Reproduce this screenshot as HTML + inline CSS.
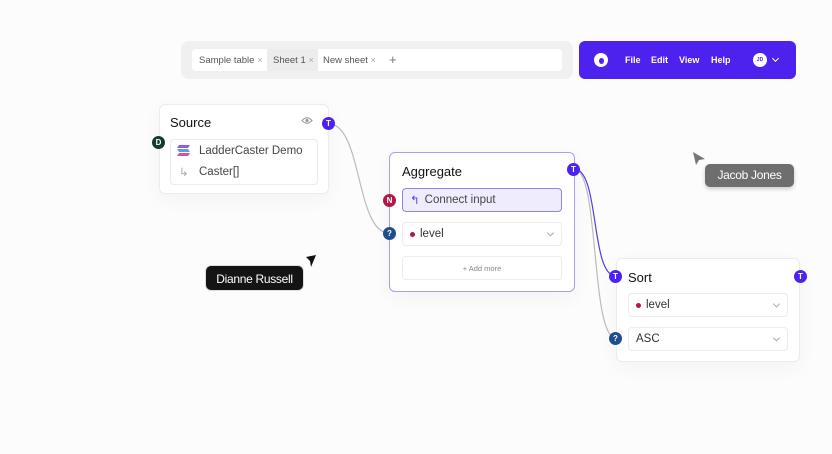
<!DOCTYPE html><html><head><style>
*{box-sizing:border-box;margin:0;padding:0}
body{width:832px;height:454px;background:#fcfcfc;font-family:"Liberation Sans",sans-serif;position:relative;overflow:hidden;color:#222}
.a{position:absolute}
.card{position:absolute;background:#fff;border:1px solid #ececec;border-radius:6px;box-shadow:0 6px 20px rgba(0,0,0,.04)}
.h{position:absolute;width:13px;height:13px;border-radius:50%;color:#fff;font-size:8px;font-weight:bold;text-align:center;line-height:13px}
.sel{position:absolute;border:1px solid #ececec;border-radius:4px;background:#fff;font-size:11.5px;color:#333;padding-left:7px;display:flex;align-items:center}
.chev{position:absolute;right:8px;top:50%;width:5px;height:5px;border-right:1px solid #aaa;border-bottom:1px solid #aaa;transform:translateY(-70%) rotate(45deg)}
.dot{width:5px;height:5px;border-radius:50%;background:#b0174a;margin-right:5px}
</style></head><body>
<svg class="a" style="left:0;top:0" width="832" height="454">
<path d="M329 124 C362 124,356 233,389 233" stroke="#bbb" stroke-width="1.2" fill="none"/>
<path d="M574 169 C600 169,590 276,616 276" stroke="#5a3be0" stroke-width="1.2" fill="none"/>
<path d="M574 169 C600 169,590 338,616 338" stroke="#bbb" stroke-width="1.2" fill="none"/>
<path d="M306 257 L316 255 L311 267 L310 261 Z" fill="#111"/>
<path d="M693 152 L705 159 L699 160 L696 165 Z" fill="#777"/>
</svg>
<div class="a" style="left:181px;top:41px;width:392px;height:38px;background:#f0f0f0;border-radius:8px"></div>
<div class="a" style="left:192px;top:49px;width:370px;height:22px;background:#fff;border-radius:4px;font-size:9.5px;color:#555">
<span class="a" style="left:7px;top:6px">Sample table <span style="color:#aaa">×</span></span>
<span class="a" style="left:75px;top:0;width:51px;height:22px;background:#ececec"></span>
<span class="a" style="left:81px;top:6px">Sheet 1 <span style="color:#aaa">×</span></span>
<span class="a" style="left:131px;top:6px">New sheet <span style="color:#aaa">×</span></span>
<span class="a" style="left:197px;top:3px;font-size:13px;color:#777">+</span></div>
<div class="a" style="left:579px;top:41px;width:217px;height:38px;background:#4d22ee;border-radius:6px;color:#fff;font-size:9px;font-weight:bold">
<span class="a" style="left:15px;top:12px;width:14px;height:14px;border-radius:50%;background:#fff"></span>
<span class="a" style="left:20px;top:17px;width:5px;height:6px;border-radius:50%;background:#4d22ee"></span>
<span class="a" style="left:46px;top:14px">File</span><span class="a" style="left:72px;top:14px">Edit</span><span class="a" style="left:100px;top:14px">View</span><span class="a" style="left:132px;top:14px">Help</span>
<span class="a" style="left:174px;top:12px;width:14px;height:14px;border-radius:50%;background:#fff;color:#4d22ee;font-size:5px;line-height:14px;text-align:center">JD</span>
<span class="a" style="left:194px;top:15px;width:5px;height:5px;border-right:1.2px solid #fff;border-bottom:1.2px solid #fff;transform:rotate(45deg)"></span></div>

<div class="card" style="left:159px;top:104px;width:170px;height:90px">
<div class="a" style="left:10px;top:10px;font-size:13px;color:#111">Source</div>
<svg class="a" style="left:141px;top:11px" width="12" height="9"><path d="M1 4.5 Q6 -1 11 4.5 Q6 10 1 4.5Z" stroke="#999" fill="none"/><circle cx="6" cy="4.5" r="1.6" fill="#999"/></svg>
<div class="a" style="left:10px;top:34px;width:148px;height:46px;border:1px solid #ececec;border-radius:4px;font-size:11.5px;color:#444">
<svg class="a" style="left:5px;top:4px" width="15" height="13"><path d="M3 1h11l-2 3H1z" fill="#8a5cf0"/><path d="M1 5h11l2 3H3z" fill="#5aa0e0"/><path d="M3 9h11l-2 3H1z" fill="#d04fb0"/></svg>
<span class="a" style="left:28px;top:5px">LadderCaster Demo</span>
<span class="a" style="left:8px;top:25px;color:#aaa">↳</span>
<span class="a" style="left:28px;top:26px">Caster[]</span></div></div>
<div class="h" style="left:322px;top:117px;background:#4d22ee">T</div>
<div class="h" style="left:152px;top:136px;background:#123b33">D</div>

<div class="card" style="left:389px;top:152px;width:186px;height:140px;border-color:#aa9ef0">
<div class="a" style="left:12px;top:11px;font-size:13px;color:#111">Aggregate</div></div>
<div class="sel" style="left:402px;top:188px;width:160px;height:24px;background:#efedfd;border-color:#9384ea;color:#444">
<span style="color:#5a3be0;margin-right:5px">↰</span>Connect input</div>
<div class="sel" style="left:402px;top:222px;width:160px;height:24px"><span class="dot"></span>level<span class="chev"></span></div>
<div class="sel" style="left:402px;top:256px;width:160px;height:24px;justify-content:center;font-size:7.5px;color:#888;padding:0">+ Add more</div>
<div class="h" style="left:567px;top:163px;background:#4d22ee">T</div>
<div class="h" style="left:383px;top:194px;background:#b0174a">N</div>
<div class="h" style="left:383px;top:227px;background:#1f4e8c">?</div>

<div class="card" style="left:616px;top:258px;width:184px;height:104px">
<div class="a" style="left:11px;top:11px;font-size:13px;color:#111">Sort</div></div>
<div class="sel" style="left:628px;top:293px;width:160px;height:24px"><span class="dot"></span>level<span class="chev"></span></div>
<div class="sel" style="left:628px;top:327px;width:160px;height:24px">ASC<span class="chev"></span></div>
<div class="h" style="left:609px;top:270px;background:#4d22ee">T</div>
<div class="h" style="left:794px;top:270px;background:#4d22ee">T</div>
<div class="h" style="left:609px;top:332px;background:#1f4e8c">?</div>

<div class="a" style="left:205px;top:265px;width:99px;height:26px;background:#141414;border-radius:6px;color:#fff;font-size:12px;text-align:center;line-height:26px;border:1px solid #ddd;letter-spacing:-.3px">Dianne Russell</div>
<div class="a" style="left:705px;top:164px;width:89px;height:23px;background:#6e6e6e;border-radius:5px;color:#fff;font-size:12px;text-align:center;line-height:23px;box-shadow:0 2px 4px rgba(0,0,0,.2);letter-spacing:-.3px">Jacob Jones</div>
</body></html>
